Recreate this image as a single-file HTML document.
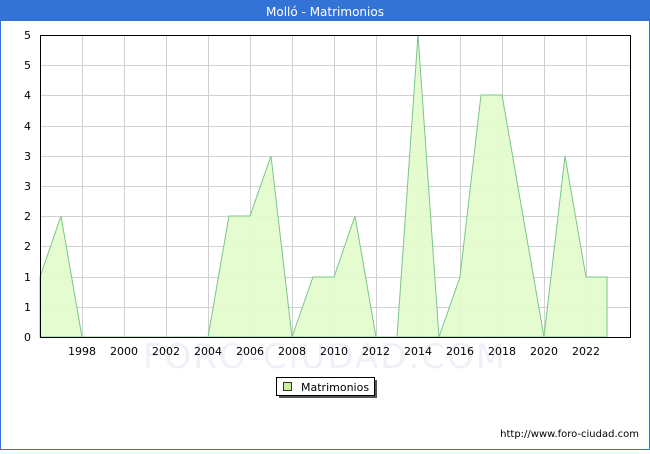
<!DOCTYPE html>
<html><head><meta charset="utf-8"><style>
body{margin:0;width:650px;height:450px;overflow:hidden;background:#fff;font-family:"DejaVu Sans","Liberation Sans",sans-serif}
</style></head><body>
<svg width="650" height="450" xmlns="http://www.w3.org/2000/svg" font-family="DejaVu Sans, Liberation Sans, sans-serif">
<rect x="0.5" y="0.5" width="649" height="449" fill="#fff" stroke="#3473d6"/>
<rect x="0" y="0" width="650" height="21" fill="#3473d6"/>
<text x="325" y="16" fill="#fff" font-size="12" text-anchor="middle">Molló - Matrimonios</text>
<text x="325" y="368" fill="#f0f0f8" font-size="34" text-anchor="middle" letter-spacing="2">FORO-CIUDAD.COM</text>
<g stroke="#d0d0d0" stroke-width="1">
<line x1="82.5" y1="35" x2="82.5" y2="337"/><line x1="124.5" y1="35" x2="124.5" y2="337"/><line x1="166.5" y1="35" x2="166.5" y2="337"/><line x1="208.5" y1="35" x2="208.5" y2="337"/><line x1="250.5" y1="35" x2="250.5" y2="337"/><line x1="292.5" y1="35" x2="292.5" y2="337"/><line x1="334.5" y1="35" x2="334.5" y2="337"/><line x1="376.5" y1="35" x2="376.5" y2="337"/><line x1="418.5" y1="35" x2="418.5" y2="337"/><line x1="460.5" y1="35" x2="460.5" y2="337"/><line x1="502.5" y1="35" x2="502.5" y2="337"/><line x1="544.5" y1="35" x2="544.5" y2="337"/><line x1="586.5" y1="35" x2="586.5" y2="337"/>
<line x1="40" y1="307.5" x2="631" y2="307.5"/><line x1="40" y1="277.5" x2="631" y2="277.5"/><line x1="40" y1="246.5" x2="631" y2="246.5"/><line x1="40" y1="216.5" x2="631" y2="216.5"/><line x1="40" y1="186.5" x2="631" y2="186.5"/><line x1="40" y1="156.5" x2="631" y2="156.5"/><line x1="40" y1="126.5" x2="631" y2="126.5"/><line x1="40" y1="95.5" x2="631" y2="95.5"/><line x1="40" y1="65.5" x2="631" y2="65.5"/>
</g>
<polygon fill="#e2fccc" fill-opacity="0.9" stroke="#7cc48c" stroke-width="1" points="40,337 40,277 61,216 82,337 208,337 229,216 250,216 271,156 292,337 313,277 334,277 355,216 376,337 397,337 418,35 439,337 460,277 481,95 502,95 523,216 544,337 565,156 586,277 607,277 607,337"/>
<rect x="40.5" y="35.5" width="590" height="302" fill="none" stroke="#000"/>
<g font-size="11" fill="#000" text-anchor="end">
<text x="31" y="341">0</text><text x="31" y="311">1</text><text x="31" y="281">1</text><text x="31" y="250">2</text><text x="31" y="220">2</text><text x="31" y="190">3</text><text x="31" y="160">3</text><text x="31" y="130">4</text><text x="31" y="99">4</text><text x="31" y="69">5</text><text x="31" y="39">5</text>
</g>
<g font-size="11" fill="#000" text-anchor="middle">
<text x="82" y="355">1998</text><text x="124" y="355">2000</text><text x="166" y="355">2002</text><text x="208" y="355">2004</text><text x="250" y="355">2006</text><text x="292" y="355">2008</text><text x="334" y="355">2010</text><text x="376" y="355">2012</text><text x="418" y="355">2014</text><text x="460" y="355">2016</text><text x="502" y="355">2018</text><text x="544" y="355">2020</text><text x="586" y="355">2022</text>
</g>
<rect x="279" y="380" width="98" height="18" fill="#555"/>
<rect x="276.5" y="377.5" width="98" height="18" fill="#fff" stroke="#000"/>
<rect x="283.5" y="382.5" width="8" height="8" fill="#c8f0a0" stroke="#333"/>
<text x="301" y="391" font-size="11" fill="#000">Matrimonios</text>
<text x="639" y="437" font-size="10" fill="#000" text-anchor="end">http://www.foro-ciudad.com</text>
</svg>
</body></html>
